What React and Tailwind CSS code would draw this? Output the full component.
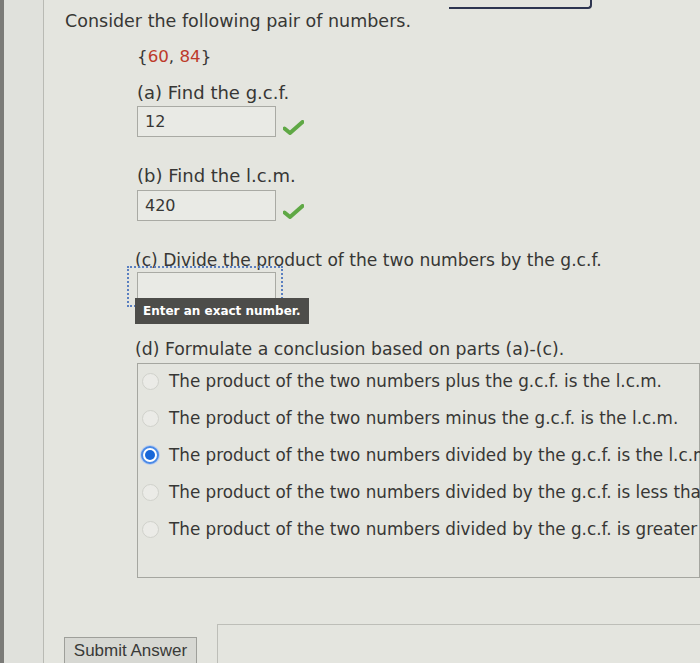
import React from "react";

function Check() {
  return (
    <svg width="21" height="15" viewBox="0 0 21 15" className="mb-[2px] ml-[7px]">
      <path d="M1.5 8.5 L7 13 L19.5 2" fill="none" stroke="#5fa845" strokeWidth="4" strokeLinejoin="round" strokeLinecap="round" />
    </svg>
  );
}

function Radio({ checked }) {
  return (
    <span className="-mt-[1px] flex h-[18px] w-[18px] shrink-0 items-center justify-center">
      {checked ? (
        <span className="flex h-[18px] w-[18px] items-center justify-center rounded-full border-[2px] border-[#4a8ae6] bg-white shadow-[0_0_0_1px_#b8cdf0]">
          <span className="h-[10px] w-[10px] rounded-full bg-[#1867d8]" />
        </span>
      ) : (
        <span className="h-[17px] w-[17px] rounded-full border border-[#d0d1cb] bg-[#ebebe7]" />
      )}
    </span>
  );
}

const options = [
  "The product of the two numbers plus the g.c.f. is the l.c.m.",
  "The product of the two numbers minus the g.c.f. is the l.c.m.",
  "The product of the two numbers divided by the g.c.f. is the l.c.m.",
  "The product of the two numbers divided by the g.c.f. is less than the l.c.m.",
  "The product of the two numbers divided by the g.c.f. is greater than the l.c.m.",
];

export default function App() {
  return (
    <div
      className="flex h-[663px] w-[700px] overflow-hidden bg-[#e4e5df] text-[#373735]"
      style={{ fontFamily: '"DejaVu Sans", Verdana, sans-serif' }}
    >
      <div className="w-[4px] shrink-0 bg-[#7b7b78]" />
      <div className="w-[40px] shrink-0 border-r border-[#b9bab4] bg-[#e0e1dc]" />
      <div className="flex min-w-0 flex-1 flex-col overflow-hidden">
        <div className="ml-[405px] h-[9px] w-[143px] shrink-0 rounded-br-[4px] border-b-[2px] border-r-[2px] border-[#2d3550]" />
        <div className="ml-[21px] mt-[2px] whitespace-nowrap text-[17.5px] leading-[20px]">
          Consider the following pair of numbers.
        </div>
        <div className="ml-[93px] flex flex-col">
          <div className="mt-[15px] text-[16.7px] leading-[20px]">
            {"{"}
            <span className="text-[#bd3a2a]">60</span>, <span className="text-[#bd3a2a]">84</span>
            {"}"}
          </div>
          <div className="mt-[17px] text-[18px] leading-[20px]">(a) Find the g.c.f.</div>
          <div className="mt-[3px] flex items-end">
            <div className="flex h-[31px] w-[139px] items-center border border-[#a9aaa4] bg-[#e9eae5] pl-[7px] text-[16px]">12</div>
            <Check />
          </div>
          <div className="mt-[29px] text-[18px] leading-[20px]">(b) Find the l.c.m.</div>
          <div className="mt-[4px] flex items-end">
            <div className="flex h-[31px] w-[139px] items-center border border-[#a9aaa4] bg-[#e9eae5] pl-[7px] text-[16px]">420</div>
            <Check />
          </div>
          <div className="relative mt-[29px] w-fit">
            <div className="pointer-events-none absolute left-[-10px] top-[16px] h-[41px] w-[156px] border-[2px] border-dotted border-[#5a7fc0]" />
            <div className="-ml-[2px] whitespace-nowrap text-[17.1px] leading-[20px]">
              (c) Divide the product of the two numbers by the g.c.f.
            </div>
            <div className="mt-[2px] h-[30px] w-[139px] border border-[#a9aaa4] bg-[#e9eae5]" />
            <div className="absolute left-[-2px] top-[48px] bg-[#4d4d4a] px-[8px] py-[3px] text-[12px] font-bold leading-[20px] text-white">
              Enter an exact number.
            </div>
          </div>
          <div className="-ml-[2px] mt-[37px] whitespace-nowrap text-[17.3px] leading-[20px]">
            (d) Formulate a conclusion based on parts (a)-(c).
          </div>
          <div className="mt-[4px] h-[215px] border border-[#a5a6a0] pl-[3px]">
            <div className="-mt-[1px] flex flex-col">
              {options.map((o, i) => (
                <div key={i} className="flex h-[37px] items-center gap-[10px] whitespace-nowrap text-[16.8px]">
                  <Radio checked={i === 2} />
                  <span>{o}</span>
                </div>
              ))}
            </div>
          </div>
        </div>
        <div className="mt-[46px] flex items-start">
          <button
            className="ml-[20px] mt-[13px] h-[28px] w-[133px] shrink-0 border border-[#9e9f9a] bg-[#d7d8d3] text-[17px] leading-[24px] text-[#3a3a38]"
            style={{ fontFamily: '"Liberation Sans", Arial, sans-serif' }}
          >
            Submit Answer
          </button>
          <div className="ml-[20px] h-[50px] flex-1 border-l border-t border-[#bdbeb8]" />
        </div>
      </div>
    </div>
  );
}
